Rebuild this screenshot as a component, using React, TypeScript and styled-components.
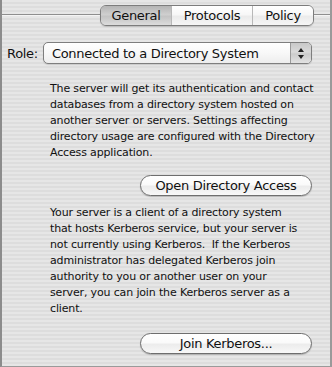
import styled, { createGlobalStyle } from 'styled-components';

const GlobalStyle = createGlobalStyle`
  html, body {
    margin: 0;
    padding: 0;
    background: #e2e2e2;
  }
  body {
    font-family: "DejaVu Sans", "Liberation Sans", sans-serif;
    -webkit-font-smoothing: antialiased;
  }
`;

const Pane = styled.div`
  width: 332px;
  height: 367px;
  box-sizing: border-box;
  border-left: 2px solid #8c8c8c;
  border-right: 2px solid #9a9a9a;
  border-bottom: 1px solid #9a9a9a;
  background: repeating-linear-gradient(
    to bottom,
    #e6e6e6 0px,
    #e6e6e6 2px,
    #dddddd 2px,
    #dddddd 4px
  );
  color: #111;
  display: flex;
  flex-direction: column;
`;

const TabRow = styled.div`
  display: flex;
  align-items: center;
  margin-top: 5px;
  height: 21px;
`;

const Rule = styled.div<{ $width?: number }>`
  flex: ${({ $width }) => ($width ? `0 0 ${$width}px` : '1')};
  height: 1px;
  background: #8e8e8e;
  box-shadow: 0 1px 0 #f4f4f4;
  margin-top: -2px;
`;

const TabGroup = styled.div`
  display: flex;
  height: 21px;
  box-sizing: border-box;
  border: 1px solid #7c7c7c;
  border-radius: 6px;
  overflow: hidden;
  box-shadow: 0 1px 1px rgba(0, 0, 0, 0.15);
`;

const Tab = styled.div<{ $width: number; $active?: boolean }>`
  width: ${({ $width }) => $width}px;
  box-sizing: border-box;
  display: flex;
  align-items: center;
  justify-content: center;
  font-size: 13px;
  letter-spacing: -0.3px;
  border-left: 1px solid #b8b8b8;
  background: ${({ $active }) =>
    $active
      ? 'linear-gradient(to bottom, #b4b4b4 0%, #cfcfcf 45%, #c4c4c4 55%, #dcdcdc 100%)'
      : 'linear-gradient(to bottom, #ffffff 0%, #f7f7f7 45%, #ebebeb 55%, #f6f6f6 100%)'};
  &:first-child {
    border-left: none;
  }
`;

const RoleRow = styled.div`
  display: flex;
  align-items: center;
  margin-top: 16px;
  padding-left: 5px;
  gap: 5px;
`;

const Label = styled.span`
  font-size: 13px;
  letter-spacing: -0.3px;
`;

const Popup = styled.div`
  width: 269px;
  height: 22px;
  box-sizing: border-box;
  border: 1px solid #7e7e7e;
  border-radius: 5px;
  display: flex;
  overflow: hidden;
  background: linear-gradient(to bottom, #ffffff 0%, #f8f8f8 50%, #ededed 100%);
  box-shadow: 0 1px 1px rgba(0, 0, 0, 0.12);
`;

const PopupValue = styled.div`
  flex: 1;
  display: flex;
  align-items: center;
  padding-left: 8px;
  font-size: 13px;
  letter-spacing: -0.3px;
`;

const Stepper = styled.div`
  width: 20px;
  border-left: 1px solid #9a9a9a;
  background: linear-gradient(to bottom, #c8c8c8 0%, #dadada 45%, #cbcbcb 55%, #e2e2e2 100%);
  display: flex;
  align-items: center;
  justify-content: center;
`;

const Body = styled.div`
  padding: 17px 18px 0 48px;
  display: flex;
  flex-direction: column;
`;

const Paragraph = styled.p`
  margin: 0;
  font-size: 11px;
  letter-spacing: -0.15px;
  line-height: 16px;
  white-space: nowrap;
`;

const ButtonRow = styled.div<{ $top: number; $bottom: number }>`
  display: flex;
  justify-content: flex-end;
  margin: ${({ $top, $bottom }) => `${$top}px 0 ${$bottom}px`};
`;

const PushButton = styled.div`
  width: 172px;
  height: 21px;
  box-sizing: border-box;
  border: 1px solid #6e6e6e;
  border-radius: 11px;
  display: flex;
  align-items: center;
  justify-content: center;
  font-size: 13px;
  letter-spacing: -0.3px;
  background: linear-gradient(to bottom, #ffffff 0%, #fafafa 45%, #ececec 55%, #f8f8f8 100%);
  box-shadow: 0 1px 1px rgba(0, 0, 0, 0.2);
`;

const Arrows = () => (
  <svg width="8" height="13" viewBox="0 0 8 13">
    <path d="M4 1 L7 5 L1 5 Z" fill="#222" />
    <path d="M4 12 L7 8 L1 8 Z" fill="#222" />
  </svg>
);

export default function App() {
  return (
    <>
      <GlobalStyle />
      <Pane>
        <TabRow>
          <Rule />
          <TabGroup>
            <Tab $width={70} $active>General</Tab>
            <Tab $width={81}>Protocols</Tab>
            <Tab $width={61}>Policy</Tab>
          </TabGroup>
          <Rule $width={16} />
        </TabRow>

        <RoleRow>
          <Label>Role:</Label>
          <Popup>
            <PopupValue>Connected to a Directory System</PopupValue>
            <Stepper>
              <Arrows />
            </Stepper>
          </Popup>
        </RoleRow>

        <Body>
          <Paragraph>
            The server will get its authentication and contact
            <br />
            databases from a directory system hosted on
            <br />
            another server or servers. Settings affecting
            <br />
            directory usage are configured with the Directory
            <br />
            Access application.
          </Paragraph>
          <ButtonRow $top={14} $bottom={9}>
            <PushButton>Open Directory Access</PushButton>
          </ButtonRow>
          <Paragraph>
            Your server is a client of a directory system
            <br />
            that hosts Kerberos service, but your server is
            <br />
            not currently using Kerberos.&nbsp; If the Kerberos
            <br />
            administrator has delegated Kerberos join
            <br />
            authority to you or another user on your
            <br />
            server, you can join the Kerberos server as a
            <br />
            client.
          </Paragraph>
          <ButtonRow $top={16} $bottom={0}>
            <PushButton>Join Kerberos...</PushButton>
          </ButtonRow>
        </Body>
      </Pane>
    </>
  );
}
